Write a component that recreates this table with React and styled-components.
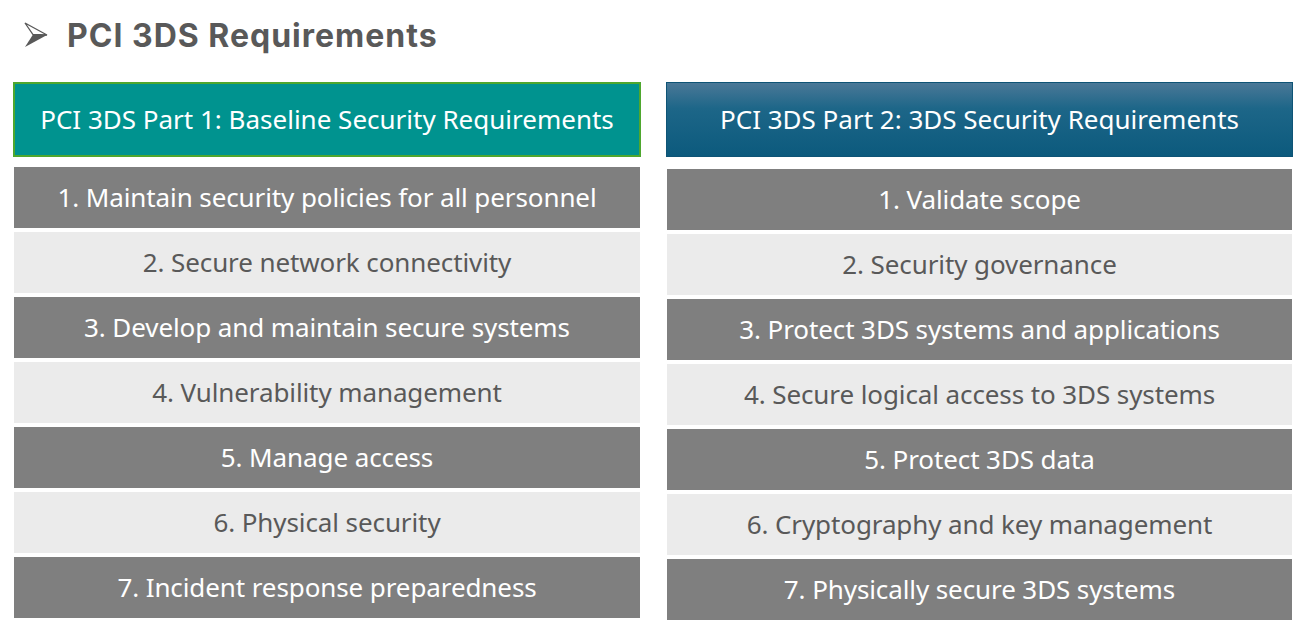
import React from 'react';
import styled, { createGlobalStyle } from 'styled-components';

const left = {
  title: 'PCI 3DS Part 1: Baseline Security Requirements',
  items: [
    '1. Maintain security policies for all personnel',
    '2. Secure network connectivity',
    '3. Develop and maintain secure systems',
    '4. Vulnerability management',
    '5. Manage access',
    '6. Physical security',
    '7. Incident response preparedness'
  ]
};

const right = {
  title: 'PCI 3DS Part 2: 3DS Security Requirements',
  items: [
    '1. Validate scope',
    '2. Security governance',
    '3. Protect 3DS systems and applications',
    '4. Secure logical access to 3DS systems',
    '5. Protect 3DS data',
    '6. Cryptography and key management',
    '7. Physically secure 3DS systems'
  ]
};

function Arrow() {
  return (
    <svg width="24" height="26" viewBox="0 0 24 26">
      <path d="M1 1 L23 13 L9 12.5 Z" fill="none" stroke="#595959" strokeWidth="1.3" strokeLinejoin="miter" />
      <path d="M1 25 L23 13 L9 12.5 Z" fill="#595959" />
    </svg>
  );
}

function Column({ data, variant, offset }) {
  return (
    <SColumn>
      <SHeader variant={variant}>{data.title}</SHeader>
      <SList offset={offset}>
        {data.items.map((item, i) => (
          <SRow key={item} dark={i % 2 === 0}>{item}</SRow>
        ))}
      </SList>
    </SColumn>
  );
}

export default function App() {
  return (
    <>
      <GlobalStyle />
      <SPage>
        <STitle>
          <Arrow />
          <span>PCI 3DS Requirements</span>
        </STitle>
        <SGrid>
          <Column data={left} variant="teal" offset={10} />
          <Column data={right} variant="blue" offset={12} />
        </SGrid>
      </SPage>
    </>
  );
}

// STYLES
const GlobalStyle = createGlobalStyle`
  body {
    margin: 0;
    background: #ffffff;
    font-family: "Noto Sans", "Liberation Sans", sans-serif;
  }
`;

const SPage = styled.div`
  width: 1294px;
  height: 624px;
  padding: 19px 1px 0 13px;
  box-sizing: border-box;
  overflow: hidden;
`;

const STitle = styled.div`
  display: flex;
  align-items: center;
  gap: 19px;
  height: 32px;
  padding-left: 11px;
  font-family: "Inter", "Liberation Sans", sans-serif;
  font-weight: 700;
  font-size: 32px;
  color: #595959;
  letter-spacing: 1px;
`;

const SGrid = styled.div`
  display: grid;
  grid-template-columns: 628px 627px;
  column-gap: 25px;
  margin-top: 31px;
`;

const SColumn = styled.div`
  display: flex;
  flex-direction: column;
`;

const SHeader = styled.div`
  height: 75px;
  box-sizing: border-box;
  display: flex;
  align-items: center;
  justify-content: center;
  color: #ffffff;
  font-size: 26px;
  padding-bottom: 2px;
  background: ${p => (p.variant === 'teal'
    ? '#00938f'
    : 'linear-gradient(to bottom, #4a7897 0%, #1d6688 35%, #0c5a7d 100%)')};
  border: ${p => (p.variant === 'teal' ? '2px solid #4ea72e' : '1px solid #0e5476')};
`;

const SList = styled.div`
  display: flex;
  flex-direction: column;
  gap: 4px;
  margin-top: ${p => p.offset}px;
  padding: 0 1px;
`;

const SRow = styled.div`
  height: 61px;
  display: flex;
  align-items: center;
  justify-content: center;
  font-size: 26px;
  letter-spacing: -0.1px;
  background: ${p => (p.dark ? '#7f7f7f' : '#ebebeb')};
  color: ${p => (p.dark ? '#ffffff' : '#595959')};
  padding-bottom: 2px;
  box-sizing: border-box;
`;
